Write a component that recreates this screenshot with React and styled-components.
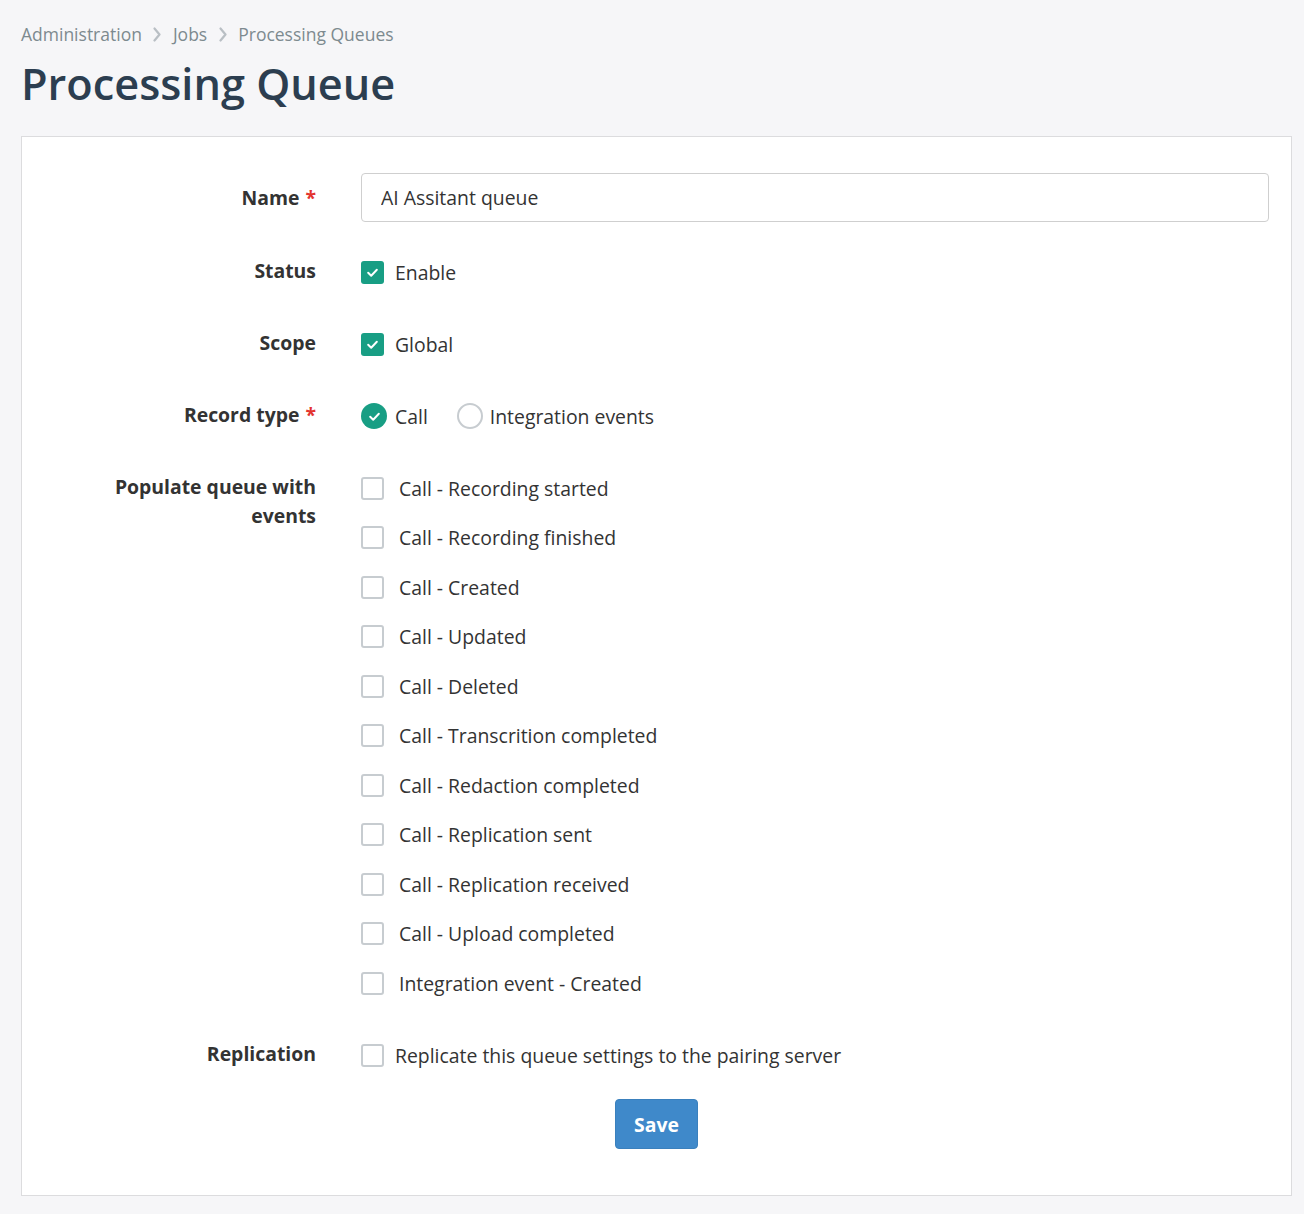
import React from "react";
import styled, { createGlobalStyle } from "styled-components";

const GlobalStyle = createGlobalStyle`
  html, body { margin: 0; padding: 0; background: #f6f6f8; }
  body { font-family: "Open Sans", "Liberation Sans", sans-serif; color: #333; }
  * { box-sizing: border-box; }
`;

const Page = styled.div`
  padding: 20px 12px 19px 21px;
  min-height: 1214px;
`;

const Breadcrumb = styled.nav`
  display: flex;
  align-items: center;
  gap: 10.5px;
  font-size: 17.5px;
  line-height: 28px;
  color: #7d8a8f;
`;

const Crumb = styled.span``;

const Chevron = () => (
  <svg width="10" height="15" viewBox="0 0 10 15">
    <path d="M2.5 1.5 L7.5 7.5 L2.5 13.5" fill="none" stroke="#b9bfc4" strokeWidth="2.2" strokeLinecap="round" strokeLinejoin="round" />
  </svg>
);

const Title = styled.h1`
  margin: 7px 0 23px 0;
  font-size: 43.3px;
  line-height: 58px;
  font-weight: 600;
  color: #2c3e50;
`;

const Card = styled.div`
  background: #fff;
  border: 1px solid #dcdcde;
  padding: 36px 22px 46px 22px;
`;

const Row = styled.div`
  display: grid;
  grid-template-columns: 272px 1fr;
  column-gap: 45px;
  align-items: start;
  margin-bottom: ${(p) => p.$mb ?? 46}px;
`;

const Label = styled.div`
  text-align: right;
  font-weight: 700;
  font-size: 19.4px;
  line-height: 29px;
  color: #333;
  padding-left: 30px;
  padding-top: ${(p) => p.$pt ?? 0}px;
  margin-top: ${(p) => p.$mt ?? -3}px;
`;

const Req = styled.span`
  color: #e3342f;
  margin-left: 6px;
`;

const TextInput = styled.input`
  width: 100%;
  height: 49px;
  border: 1px solid #cfcfcf;
  border-radius: 4px;
  padding: 0 19px;
  font-family: inherit;
  font-size: 19.4px;
  color: #333;
  outline: none;
  background: #fff;
`;

const Options = styled.div`
  display: flex;
  align-items: center;
  gap: 29px;
`;

const List = styled.div`
  display: flex;
  flex-direction: column;
  gap: 23.5px;
`;

const Check = styled.label`
  display: flex;
  align-items: center;
  gap: ${(p) => p.$gap ?? 11}px;
  height: 26px;
  font-size: 19.4px;
  color: #333;
  cursor: pointer;
  white-space: nowrap;
`;

const Box = styled.span`
  width: 23px;
  height: 23px;
  border-radius: 3px;
  flex: 0 0 auto;
  display: inline-flex;
  align-items: center;
  justify-content: center;
  background: ${(p) => (p.$on ? "#189e84" : "#fff")};
  border: ${(p) => (p.$on ? "none" : "2px solid #c7ccd0")};
`;

const Radio = styled.span`
  width: 26px;
  height: 26px;
  border-radius: 50%;
  flex: 0 0 auto;
  display: inline-flex;
  align-items: center;
  justify-content: center;
  background: ${(p) => (p.$on ? "#189e84" : "#fff")};
  border: ${(p) => (p.$on ? "none" : "2px solid #c7ccd0")};
`;

const Tick = () => (
  <svg width="13" height="11" viewBox="0 0 12 10">
    <path d="M2 5.2 L4.8 8 L10 2.5" fill="none" stroke="#fff" strokeWidth="1.8" strokeLinecap="round" strokeLinejoin="round" />
  </svg>
);

const Actions = styled.div`
  display: flex;
  justify-content: center;
  padding-top: 31px;
  margin-top: -46px;
`;

const SaveButton = styled.button`
  width: 83px;
  height: 50px;
  border: 1px solid #3a80bd;
  border-radius: 4px;
  background: #3f89ca;
  color: #fff;
  font-family: inherit;
  font-weight: 700;
  font-size: 19.4px;
  cursor: pointer;
`;

const events = [
  "Call - Recording started",
  "Call - Recording finished",
  "Call - Created",
  "Call - Updated",
  "Call - Deleted",
  "Call - Transcrition completed",
  "Call - Redaction completed",
  "Call - Replication sent",
  "Call - Replication received",
  "Call - Upload completed",
  "Integration event - Created",
];

export default function App() {
  return (
    <>
      <GlobalStyle />
      <Page>
        <Breadcrumb>
          <Crumb>Administration</Crumb>
          <Chevron />
          <Crumb>Jobs</Crumb>
          <Chevron />
          <Crumb>Processing Queues</Crumb>
        </Breadcrumb>
        <Title>Processing Queue</Title>
        <Card>
          <Row $mb={37}>
            <Label $pt={10} $mt={0}>
              Name<Req>*</Req>
            </Label>
            <TextInput defaultValue="AI Assitant queue" />
          </Row>
          <Row>
            <Label>Status</Label>
            <Check>
              <Box $on><Tick /></Box>
              Enable
            </Check>
          </Row>
          <Row>
            <Label>Scope</Label>
            <Check>
              <Box $on><Tick /></Box>
              Global
            </Check>
          </Row>
          <Row>
            <Label>
              Record type<Req>*</Req>
            </Label>
            <Options>
              <Check $gap={8}>
                <Radio $on><Tick /></Radio>
                Call
              </Check>
              <Check $gap={7}>
                <Radio />
                Integration events
              </Check>
            </Options>
          </Row>
          <Row>
            <Label>Populate queue with events</Label>
            <List>
              {events.map((e) => (
                <Check key={e} $gap={15}>
                  <Box />
                  {e}
                </Check>
              ))}
            </List>
          </Row>
          <Row>
            <Label>Replication</Label>
            <Check>
              <Box />
              Replicate this queue settings to the pairing server
            </Check>
          </Row>
          <Actions>
            <SaveButton>Save</SaveButton>
          </Actions>
        </Card>
      </Page>
    </>
  );
}
